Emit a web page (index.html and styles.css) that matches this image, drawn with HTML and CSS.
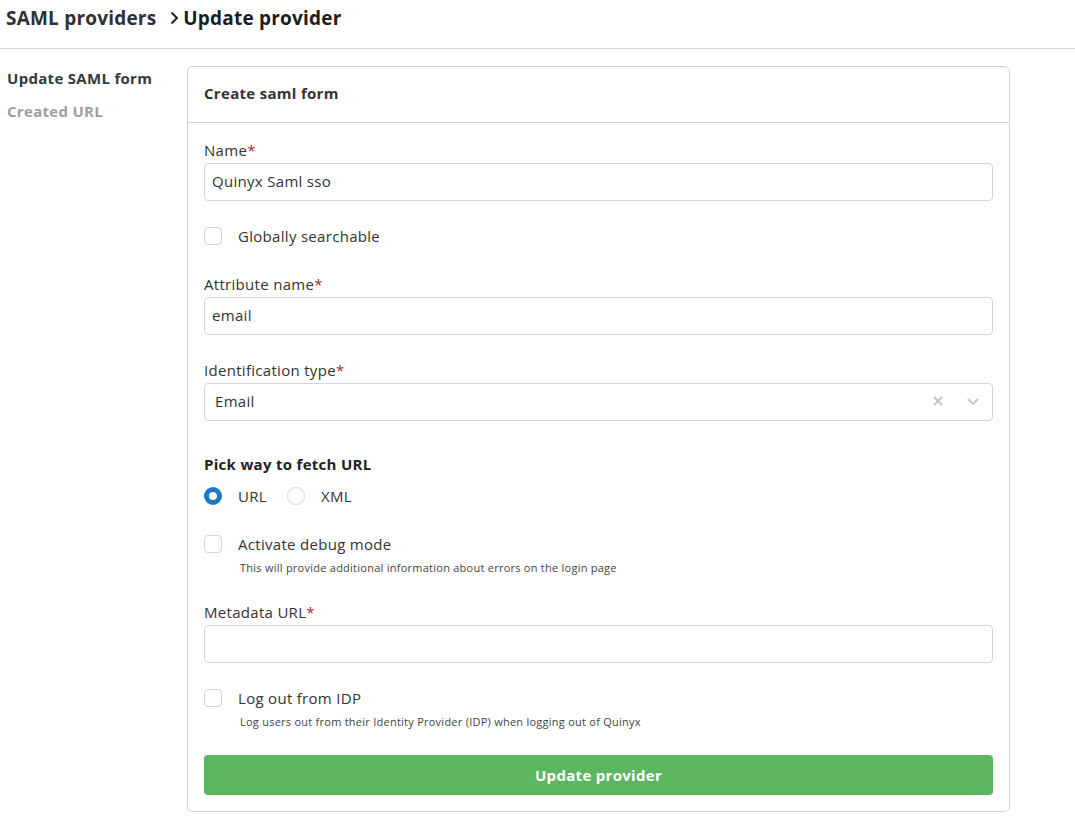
FILE: index.html
```html
<!DOCTYPE html>
<html>
<head>
<meta charset="utf-8">
<link rel="stylesheet" href="styles.css">
</head>
<body>
<header class="topbar">
  <h1 class="crumbs"><span class="crumb">SAML providers</span><span class="chev"><svg width="12" height="14" viewBox="0 0 12 14"><path d="M3.5 1.5 L9 7 L3.5 12.5" fill="none" stroke="#222" stroke-width="2"/></svg></span><span class="crumb current">Update provider</span></h1>
</header>
<div class="main">
  <nav class="side">
    <div class="side-item active">Update SAML form</div>
    <div class="side-item">Created URL</div>
  </nav>
  <section class="card">
    <div class="card-head">Create saml form</div>
    <div class="card-body">
      <div class="field">
        <label class="lbl">Name<span class="req">*</span></label>
        <div class="input">Quinyx Saml sso</div>
      </div>
      <div class="check-row solo"><span class="box"></span><span class="check-text">Globally searchable</span></div>
      <div class="field">
        <label class="lbl">Attribute name<span class="req">*</span></label>
        <div class="input">email</div>
      </div>
      <div class="field ident">
        <label class="lbl">Identification type<span class="req">*</span></label>
        <div class="input select"><span class="sel-val">Email</span>
          <span class="sel-icons">
            <svg width="12" height="12" viewBox="0 0 12 12"><path d="M2 2 L10 10 M10 2 L2 10" stroke="#c4c4c4" stroke-width="2"/></svg>
            <svg width="14" height="10" viewBox="0 0 14 10"><path d="M2 3 L7 8 L12 3" fill="none" stroke="#c4c4c4" stroke-width="1.8"/></svg>
          </span>
        </div>
      </div>
      <div class="group">
        <div class="group-title">Pick way to fetch URL</div>
        <div class="radios">
          <span class="radio on"></span><span class="radio-text">URL</span>
          <span class="radio"></span><span class="radio-text">XML</span>
        </div>
      </div>
      <div class="check-block">
        <div class="check-row"><span class="box"></span><span class="check-text">Activate debug mode</span></div>
        <div class="help">This will provide additional information about errors on the login page</div>
      </div>
      <div class="field">
        <label class="lbl">Metadata URL<span class="req">*</span></label>
        <div class="input"></div>
      </div>
      <div class="check-block last">
        <div class="check-row"><span class="box"></span><span class="check-text">Log out from IDP</span></div>
        <div class="help">Log users out from their Identity Provider (IDP) when logging out of Quinyx</div>
      </div>
      <button class="btn">Update provider</button>
    </div>
  </section>
</div>
</body>
</html>
```
FILE: styles.css
```css
* { box-sizing: border-box; }
body {
  margin: 0;
  font-family: "Open Sans", Lato, sans-serif;
  color: #333;
  background: #fff;
  letter-spacing: 0.3px;
}
.topbar {
  height: 49px;
  border-bottom: 1px solid #c9d4dd;
  padding: 0 6px;
  display: flex;
  align-items: center;
}
.crumbs {
  margin: 0;
  font-size: 19px;
  line-height: 24px;
  font-weight: 700;
  letter-spacing: 0.2px;
  display: flex;
  align-items: center;
  color: #2f3033;
  padding-bottom: 12px;
}
.chev { margin-left: 12px; margin-right: 3px; display: flex; }
.crumb.current { color: #1d1d1f; }
.main {
  display: flex;
  padding-top: 16px;
}
.side {
  width: 187px;
  padding-left: 7px;
  padding-top: 3px;
}
.side-item {
  font-size: 15px;
  line-height: 20px;
  font-weight: 700;
  color: #9aa0a0;
  height: 33px;
}
.side-item.active { color: #36393c; }
.card {
  width: 823px;
  border: 1px solid #cfd3d5;
  border-radius: 5px;
  background: #fff;
  margin-top: 1px;
}
.card-head {
  height: 56px;
  border-bottom: 1px solid #cfd3d5;
  padding: 0 16px 4px;
  display: flex;
  align-items: center;
  font-size: 15px;
  font-weight: 700;
  color: #333;
}
.card-body {
  display: flex;
  flex-direction: column;
  padding: 18px 16px 16px 16px;
}
.field { margin-bottom: 26px; }
.field.ident { margin-bottom: 34px; }
.lbl {
  display: block;
  font-size: 15px;
  color: #333;
  line-height: 18px;
  margin-bottom: 4px;
}
.req { color: #a52a2a; }
.input {
  height: 38px;
  border: 1px solid #d4d4d4;
  border-radius: 4px;
  padding: 0 7px;
  display: flex;
  align-items: center;
  font-size: 15px;
  line-height: 18px;
  color: #333;
  padding-bottom: 3px;
}
.select { padding-left: 10px; justify-content: space-between; padding-right: 12px; }
.sel-icons { display: flex; gap: 22px; align-items: center; }
.check-row {
  display: flex;
  align-items: center;
  height: 18px;
}
.check-row.solo { margin-bottom: 30px; }
.box {
  width: 18px;
  height: 18px;
  border: 1px solid #d4d4d4;
  border-radius: 4px;
  margin-right: 16px;
  flex: none;
}
.check-text { font-size: 15px; line-height: 18px; color: #333; }
.group { margin-bottom: 30px; }
.group-title { font-size: 15px; line-height: 18px; font-weight: 700; color: #222; margin-bottom: 14px; }
.radios { display: flex; align-items: center; height: 18px; }
.radio {
  width: 18px;
  height: 18px;
  border-radius: 50%;
  border: 1px solid #d4d4d4;
  margin-right: 16px;
  flex: none;
}
.radio.on { border: 5px solid #1a76c6; }
.radio-text { font-size: 15px; line-height: 18px; color: #333; margin-right: 20px; }
.check-block { margin-bottom: 28px; }
.check-block.last { margin-bottom: 26px; }
.help {
  font-size: 11px;
  line-height: 14px;
  letter-spacing: 0.25px;
  color: #444;
  padding-left: 36px;
  margin-top: 8px;
}
.btn {
  display: block;
  width: 100%;
  height: 40px;
  border: 0;
  border-radius: 4px;
  background: #5cb660;
  color: #fff;
  font-family: inherit;
  font-size: 15px;
  letter-spacing: 0.3px;
  font-weight: 700;
  margin-top: 0;
}
```
